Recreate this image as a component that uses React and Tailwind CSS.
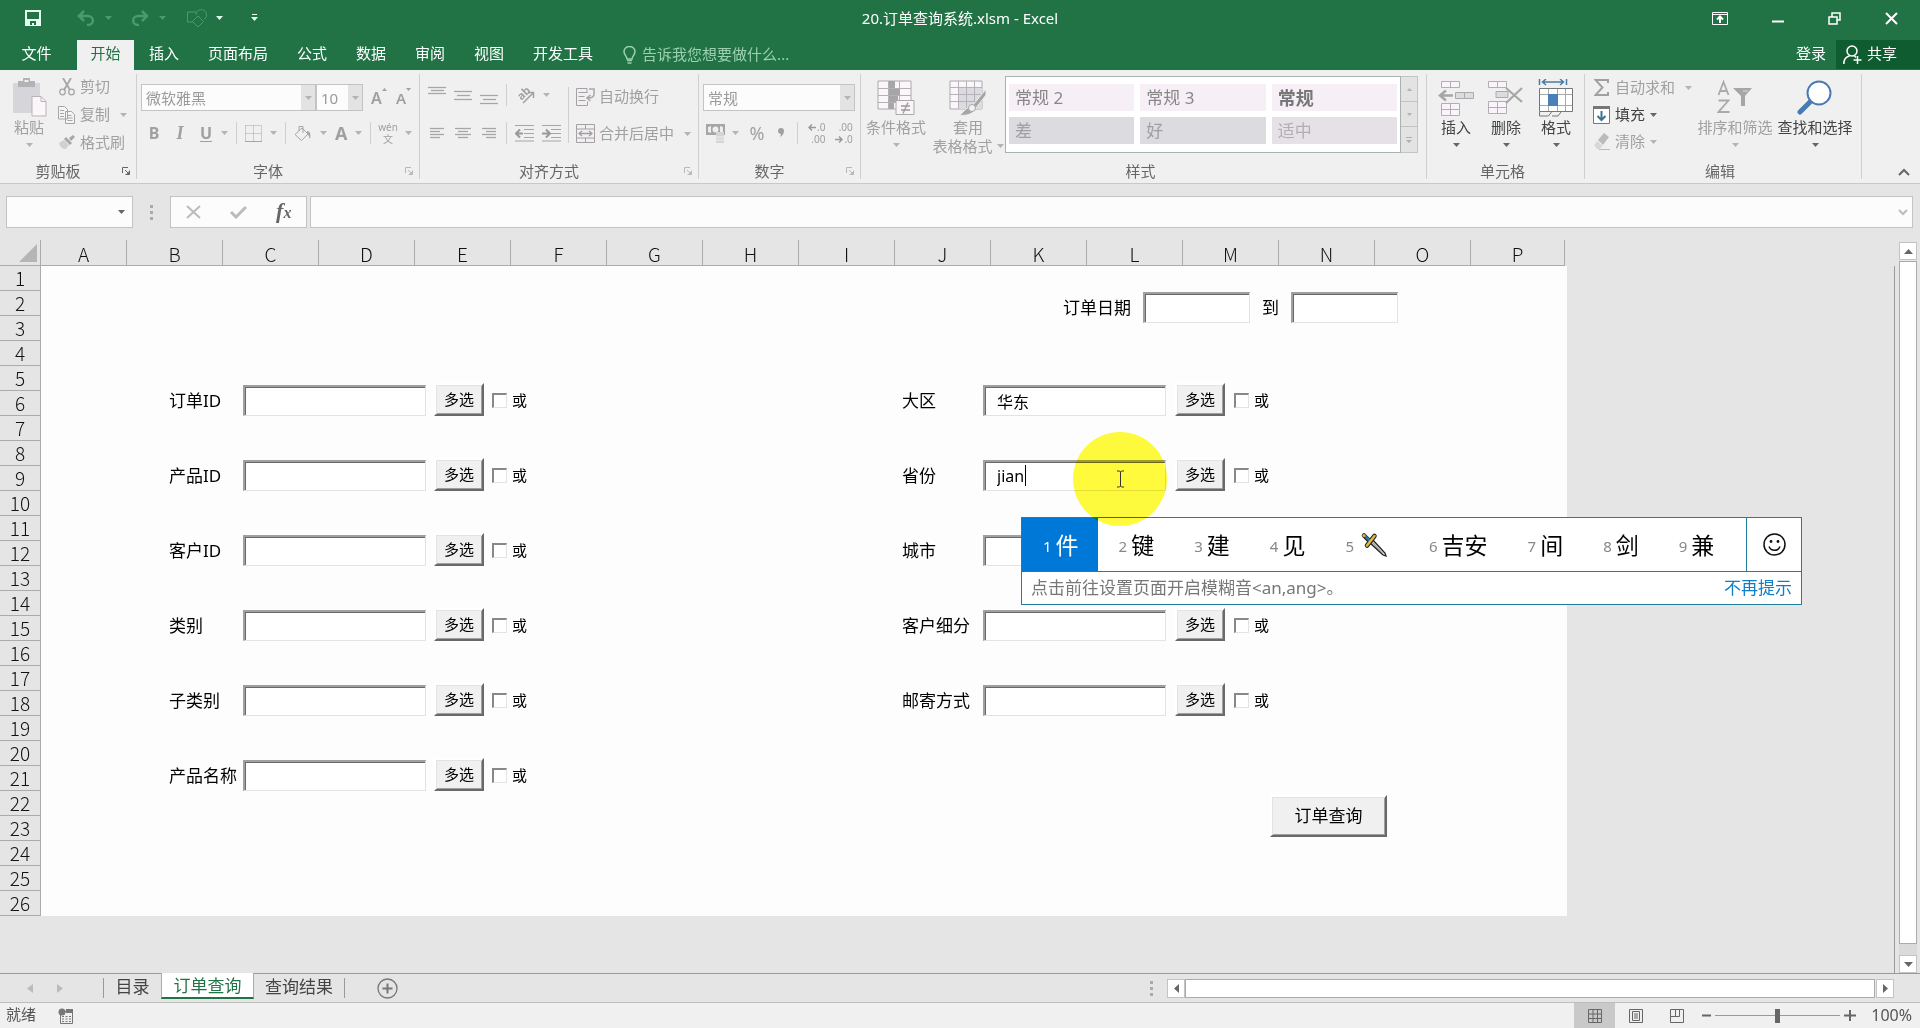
import React, { useState } from 'react';

const COLUMNS = ['B', 'C', 'D', 'E', 'F', 'G', 'H', 'I', 'J', 'K', 'L', 'M', 'N', 'O'];
const ROWS = Array.from({ length: 26 }, (_, i) => i + 1);
const TABS = ['插入', '页面布局', '公式', '数据', '审阅', '视图', '开发工具'];
const LEFT_FIELDS = ['订单ID', '产品ID', '客户ID', '类别', '子类别', '产品名称'];
const RIGHT_FIELDS = ['大区', '省份', '城市', '客户细分', '邮寄方式'];

const Svg = ({ w, h, children, className = '' }) => (
    <svg width={w} height={h} viewBox={`0 0 ${w} ${h}`} fill="none" className={`shrink-0 ${className}`} aria-hidden="true">
        {children}
    </svg>
);

const Caret = ({ className = 'text-[#b4b4b4]' }) => (
    <Svg w={7} h={4} className={className}>
        <path d="M0 0h7L3.5 4z" fill="currentColor" />
    </Svg>
);

const Separator = () => <div className="h-[22px] w-px shrink-0 bg-[#cfcfcf]" />;

const Launcher = ({ active }) => (
    <button type="button" aria-label="更多设置" className={active ? 'text-[#666]' : 'text-[#b8b8b8]'}>
        <Svg w={8} h={8}>
            <path d="M.5 6V.5H6M3 3l4 4M7.5 3.5v4h-4" stroke="currentColor" />
            <path d="M7.5 4v3.5H4z" fill="currentColor" />
        </Svg>
    </button>
);

const Group = ({ label, width, launcher, active, children }) => (
    <>
        <section className={`flex shrink-0 flex-col ${width}`}>
            <div className="h-[90px]">{children}</div>
            <div className="flex h-[22px] items-center gap-1.5 pr-1.5 text-[#666]">
                <h2 className="flex-1 text-center">{label}</h2>
                {launcher && <Launcher active={active} />}
            </div>
        </section>
        <div className="my-1 w-px shrink-0 bg-[#cfcfcf]" />
    </>
);

const RibbonSelect = ({ label, value, width }) => (
    <div className={`flex h-[27px] border border-[#c3c3c3] bg-[#fcfcfc] ${width}`}>
        <select aria-label={label} className="min-w-0 flex-1 appearance-none pl-1 leading-5 text-[#9a9a9a] outline-none">
            <option>{value}</option>
        </select>
        <span className="flex w-[14px] items-center justify-center bg-[#e3e3e3]">
            <Caret />
        </span>
    </div>
);

const BigButton = ({ icon, label, width, active, caret = true, second }) => (
    <button type="button" className={`flex flex-col items-center whitespace-nowrap ${width} ${active ? 'text-[#444]' : 'text-[#a0a0a0]'}`}>
        <span className="flex h-[39px] items-center">{icon}</span>
        <span className="leading-5">{label}</span>
        {second && (
            <span className="flex items-center gap-1 leading-[18px]">
                {second} <Caret />
            </span>
        )}
        {caret && !second && <Caret className={active ? 'mt-1.5 text-[#666]' : 'mt-1.5 text-[#b4b4b4]'} />}
    </button>
);

const SmallButton = ({ icon, label, caret, active }) => (
    <button type="button" className={`flex h-[27px] items-center gap-[5px] whitespace-nowrap ${active ? 'text-[#444]' : 'text-[#a0a0a0]'}`}>
        <span className="flex w-[17px] justify-center">{icon}</span>
        {label}
        {caret && <Caret className={active ? 'text-[#666]' : 'text-[#b4b4b4]'} />}
    </button>
);

const Lines = ({ rows, h = 20 }) => (
    <Svg w={18} h={h}>
        {rows.map(([x1, x2, y]) => (
            <path key={y} d={`M${x1} ${y}.5H${x2}`} stroke="#a6a6a6" strokeWidth="1.3" />
        ))}
    </Svg>
);

const IndentIcon = ({ right }) => (
    <Svg w={19} h={18}>
        <path d="M0 1.5h19M9 5.5h10M9 9.5h10M9 13.5h10M0 17h19" stroke="#a6a6a6" strokeWidth="1.2" />
        <path d={right ? 'M0 9.5h7M4 5.5l4 4-4 4' : 'M8 9.5H1M5 5.5l-4 4 4 4'} stroke="#999" strokeWidth="2" />
    </Svg>
);

const TitleBar = () => (
    <header className="grid h-10 grid-cols-[1fr_auto_1fr] items-center pb-1 text-white">
        <div className="flex items-center pl-[25px]">
            <button type="button" aria-label="保存">
                <Svg w={16} h={16}>
                    <path d="M1 1h14v14H1z" stroke="#e4fff0" strokeWidth="2" />
                    <path d="M1 9h14v6H1z" fill="#e4fff0" />
                    <path d="M5 11h6v4H9v-2H7v2H5z" fill="#217346" />
                </Svg>
            </button>
            <div className="ml-9 flex items-center gap-2.5 text-[#4b9a6d]">
                <Svg w={18} h={16}>
                    <path d="M2 6h9a4.500 4.200 0 0 1 0 9h-1M7 1L2 6l5 5" stroke="currentColor" strokeWidth="2.500" />
                </Svg>
                <Caret className="text-[#4b9a6d]" />
            </div>
            <div className="ml-[19px] flex items-center gap-2.5 text-[#4b9a6d]">
                <Svg w={18} h={16}>
                    <path d="M16 6H7a4.500 4.200 0 0 0 0 9h1M11 1l5 5-5 5" stroke="currentColor" strokeWidth="2.500" />
                </Svg>
                <Caret className="text-[#4b9a6d]" />
            </div>
            <div className="ml-[21px] flex items-center gap-2">
                <Svg w={21} h={20}>
                    <path d="M6 14H.5V4H9M11 8l5.500 5.500L11 19l-5.500-5.500z" stroke="#4b9a6d" />
                    <path d="M9 7a5.300 5.300 0 1 1 8 4.500" stroke="#4b9a6d" />
                </Svg>
                <Caret className="text-[#e4fff0]" />
            </div>
            <Svg w={7} h={8} className="ml-7">
                <path d="M1 .5h5" stroke="#e4fff0" />
                <path d="M0 3h7L3.500 7z" fill="#e4fff0" />
            </Svg>
        </div>
        <h1 className="leading-6">20.订单查询系统.xlsm - Excel</h1>
        <div className="flex items-center justify-end gap-11 pr-[22px]">
            <button type="button" aria-label="功能区显示选项">
                <Svg w={16} h={13}>
                    <path d="M.5.500h15v12H.5zM.5 2.500h15" stroke="#fff" />
                    <path d="M8 11V5M5 7.500L8 4.500l3 3" stroke="#fff" strokeWidth="2" />
                </Svg>
            </button>
            <button type="button" aria-label="最小化">
                <Svg w={12} h={12}><path d="M0 9.500h12" stroke="#fff" strokeWidth="2" /></Svg>
            </button>
            <button type="button" aria-label="还原">
                <Svg w={13} h={13}>
                    <path d="M1 5h8v7H1zM4 5V1h8v7H9" stroke="#fff" strokeWidth="1.500" />
                </Svg>
            </button>
            <button type="button" aria-label="关闭">
                <Svg w={13} h={13}><path d="M1 1l11 11M12 1L1 12" stroke="#fff" strokeWidth="2" /></Svg>
            </button>
        </div>
    </header>
);

const TabBar = () => (
    <nav className="flex h-[30px] items-stretch text-white">
        <button type="button" className="w-[77px] pr-1 pb-[3px]">文件</button>
        <button type="button" className="w-[57px] bg-[#f0f0f0] pb-[3px] text-[#217346]">开始</button>
        {TABS.map((tab) => (
            <button key={tab} type="button" className="pr-[14px] pb-[3px] pl-[15px]">{tab}</button>
        ))}
        <label className="ml-4 flex items-center gap-1.5 text-[#9bd0b0]">
            <Svg w={13} h={18}>
                <path d="M4 13c0-3-3-4-3-7.500a5.500 5 0 0 1 11 0C12 9 9 10 9 13z" stroke="currentColor" strokeWidth="1.500" />
                <path d="M4 14.500h5M4.500 17h4" stroke="currentColor" strokeWidth="1.500" />
            </Svg>
            <input placeholder="告诉我您想要做什么..." className="w-48 pb-0.5 outline-none placeholder:text-[#9bd0b0]" />
        </label>
        <div className="ml-auto flex">
            <button type="button" className="px-2.5 pb-[3px]">登录</button>
            <button type="button" className="mb-px flex w-[84px] items-center gap-[5px] bg-[#0e5c2f] pl-[7px]">
                <Svg w={19} h={19}>
                    <circle cx="9" cy="6" r="5" stroke="#fff" strokeWidth="1.500" />
                    <path d="M.8 19c0-5 3-7.500 6-8.200M11 10.500l2 2M14.500 11v8M10.500 15h8" stroke="#fff" strokeWidth="1.500" />
                </Svg>
                <span className="pb-0.5">共享</span>
            </button>
        </div>
    </nav>
);

const ClipboardGroup = () => (
    <Group label="剪贴板" width="w-[136px]" launcher active>
        <div className="flex pt-[3px]">
            <div className="w-[58px] pt-[5px]">
                <BigButton
                    label="粘贴"
                    width="w-[58px]"
                    icon={
                        <Svg w={35} h={39}>
                            <path d="M1 5h27v30H1z" fill="#d6d5d9" />
                            <path d="M6 3h5V0h7v3h5v6H6z" fill="#b3b2b5" />
                            <path d="M12.500 2h4v2h-4z" fill="#f0f0f0" />
                            <path d="M20 18.500h9l5 5V38H20z" fill="#faf6fa" stroke="#b8b3b8" />
                            <path d="M29 18.500v5h5" stroke="#b8b3b8" />
                        </Svg>
                    }
                />
            </div>
            <div className="flex flex-col gap-px">
                <SmallButton
                    label="剪切"
                    icon={
                        <Svg w={16} h={18}>
                            <path d="M4 0l7 12M12 0L5 12" stroke="#a6a6a6" strokeWidth="1.800" />
                            <circle cx="3.500" cy="14" r="2.800" stroke="#a6a6a6" strokeWidth="1.300" />
                            <circle cx="12.500" cy="14" r="2.800" stroke="#a6a6a6" strokeWidth="1.300" />
                        </Svg>
                    }
                />
                <div className="flex items-center gap-2.5">
                    <SmallButton
                        label="复制"
                        icon={
                            <Svg w={17} h={18}>
                                <path d="M.5.500h6l3 3V13h-9zM7.500 5.500h6l3 3v9h-9z" fill="#f5f3f5" stroke="#a6a6a6" />
                                <path d="M2 4.500h4M2 7.500h4M2 10.500h4M9.500 9.500h4M9.500 12h5M9.500 14.500h5" stroke="#a6a6a6" />
                            </Svg>
                        }
                    />
                    <Caret />
                </div>
                <SmallButton
                    label="格式刷"
                    icon={
                        <Svg w={17} h={15}>
                            <path d="M1 8l5-3 5 5-3 4C4 14 2 12 1 8z" fill="#d2d0d2" />
                            <path d="M6 4l2-2 6 6-2 2zM11 3l4-3 2 2-4 4z" fill="#a6a6a6" />
                        </Svg>
                    }
                />
            </div>
        </div>
    </Group>
);

const FontGroup = () => (
    <Group label="字体" width="w-[282px]" launcher>
        <div className="flex h-full flex-col gap-2.5 pt-[14px]">
            <div className="flex items-center pl-1">
                <RibbonSelect label="字体" value="微软雅黑" width="w-[175px]" />
                <RibbonSelect label="字号" value="10" width="w-[47px]" />
                <div className="flex gap-2.5 pl-2 text-[#a0a0a0]">
                    <button type="button" aria-label="增大字号" className="flex w-[15px]">
                        <span className="text-base leading-5 font-semibold">A</span>
                        <Svg w={5} h={3}><path d="M0 3h5L2.500 0z" fill="currentColor" /></Svg>
                    </button>
                    <button type="button" aria-label="减小字号" className="flex w-[15px]">
                        <span className="leading-5 font-semibold">A</span>
                        <Svg w={5} h={3}><path d="M0 0h5L2.500 3z" fill="currentColor" /></Svg>
                    </button>
                </div>
            </div>
            <div className="flex h-6 items-center gap-2 pl-[10px] text-[#a0a0a0]">
                <div className="flex items-center gap-3">
                    <button type="button" className="w-[14px] text-base font-bold">B</button>
                    <button type="button" className="w-[14px] font-['Liberation_Serif',serif] text-lg font-bold italic">I</button>
                    <button type="button" className="w-[14px] text-base font-bold underline underline-offset-2">U</button>
                </div>
                <Caret />
                <Separator />
                <Svg w={17} h={17}>
                    <path d="M.5.500h16M.5 8.500h16M.5.500v16M8.500.500v16M16.500.500v16" stroke="#a6a6a6" strokeDasharray="1 1" />
                    <path d="M0 16.500h17" stroke="#a6a6a6" />
                </Svg>
                <Caret />
                <Separator />
                <Svg w={18} h={17}>
                    <path d="M1 9.500l7-6.500 6 6-6.500 6.500z" stroke="#a6a6a6" />
                    <path d="M5 6V1.500h4V8" stroke="#a6a6a6" />
                    <path d="M13 6c3 0 4 3 3 8-1-1-1-4-3-6z" fill="#a6a6a6" />
                </Svg>
                <Caret />
                <button type="button" className="w-3 text-lg leading-5 font-bold">A</button>
                <Caret />
                <Separator />
                <button type="button" className="flex w-[18px] flex-col items-center text-[10px] leading-3">
                    <span>wén</span>
                    <span>文</span>
                </button>
                <Caret />
            </div>
        </div>
    </Group>
);

const AlignGroup = () => (
    <Group label="对齐方式" width="w-[278px]" launcher>
        <div className="flex items-center pt-2 pl-2">
            <div className="flex flex-col gap-[2px]">
                <div className="flex h-[34px] items-center gap-2">
                    <Lines rows={[[0, 18, 2], [3, 16, 5], [0, 18, 8]]} />
                    <Lines rows={[[0, 18, 6], [3, 16, 10], [0, 18, 14]]} />
                    <Lines rows={[[0, 18, 10], [3, 16, 14], [0, 18, 18]]} />
                    <Separator />
                    <Svg w={20} h={18}>
                        <text x="3" y="12" transform="rotate(-45 8 9)" fontSize="11" fill="#a0a0a0" fontWeight="bold">ab</text>
                        <path d="M8 17L18 7M18.500 12V6.500H13" stroke="#a0a0a0" strokeWidth="1.500" />
                    </Svg>
                    <Caret />
                </div>
                <div className="flex h-[38px] items-center gap-2">
                    <Lines rows={[[2, 16, 5], [2, 12, 8], [2, 16, 11], [2, 12, 14]]} />
                    <Lines rows={[[1, 17, 5], [4, 14, 8], [1, 17, 11], [4, 14, 14]]} />
                    <Lines rows={[[2, 16, 5], [6, 16, 8], [2, 16, 11], [6, 16, 14]]} />
                    <Separator />
                    <IndentIcon />
                    <IndentIcon right />
                </div>
            </div>
            <div className="mx-[7px] h-14 w-px bg-[#cfcfcf]" />
            <div className="flex flex-col gap-[9px] text-[#a0a0a0]">
                <button type="button" className="flex h-7 items-center gap-1">
                    <Svg w={19} h={18}>
                        <path d="M11 4.500V.5H.5v17h11v-4M2.500 4.500h9M2.500 8.500h6M2.500 12.500h7" stroke="#a6a0a6" />
                        <path d="M13 1h5v5c0 3-2 4-6 4M14.500 7l-3.500 3 3.500 3" stroke="#a6a6a6" strokeWidth="1.500" />
                    </Svg>
                    自动换行
                </button>
                <button type="button" className="flex h-7 items-center gap-1 whitespace-nowrap">
                    <Svg w={19} h={19}>
                        <path d="M.5.500h18v18H.5zM.5 5h18M.5 14h18M9.500.500V5M9.500 14v4.500" stroke="#a6a0a6" />
                        <path d="M3 9.500h13M6 7L3 9.500 6 12M13 7l3 2.500-3 2.500" stroke="#a0a0a0" strokeWidth="1.300" />
                    </Svg>
                    合并后居中
                    <span className="ml-1.5"><Caret /></span>
                </button>
            </div>
        </div>
    </Group>
);

const NumberGroup = () => (
    <Group label="数字" width="w-[161px]" launcher>
        <div className="flex flex-col gap-2.5 px-1 pt-[14px]">
            <RibbonSelect label="数字格式" value="常规" width="w-[152px]" />
            <div className="flex h-6 items-center gap-2.5 pl-[3px] text-[#a0a0a0]">
                <div className="flex items-center gap-1.5">
                    <Svg w={20} h={19}>
                        <path d="M0 0h19v11H0z" fill="#a6a6a6" />
                        <path d="M2 3l3-1v7l-3-1zM17 3l-3-1v7l3-1z" fill="#eee" />
                        <circle cx="9.500" cy="5.500" r="3" fill="#eee" />
                        <path d="M10 8h8v11h-8z" fill="#d6d4d8" />
                        <path d="M6 13h12M6 16h12" stroke="#efefef" />
                    </Svg>
                    <Caret />
                </div>
                <button type="button" className="w-4 text-lg leading-5">%</button>
                <button type="button" aria-label="千位分隔样式" className="flex w-3 justify-center">
                    <Svg w={8} h={12}><path d="M1 4a3 3 0 1 1 6 0c0 3-2 5-4 6 0-1 1-2 1-3-2 0-3-1.500-3-3z" fill="#a0a0a0" /></Svg>
                </button>
                <Separator />
                <button type="button" className="flex flex-col items-end text-[10px] leading-3">
                    <span className="flex items-center gap-px">
                        <Svg w={8} h={7}><path d="M8 3.500H1M4 .5l-3 3 3 3" stroke="#999" strokeWidth="1.500" /></Svg>.0
                    </span>
                    <span>.00</span>
                </button>
                <button type="button" className="flex flex-col items-end text-[10px] leading-3">
                    <span>.00</span>
                    <span className="flex items-center gap-px">
                        <Svg w={8} h={7}><path d="M0 3.500h7M4 .5l3 3-3 3" stroke="#999" strokeWidth="1.500" /></Svg>.0
                    </span>
                </button>
            </div>
        </div>
    </Group>
);

const StylesGroup = () => (
    <Group label="样式" width="w-[565px]">
        <div className="flex pt-1.5">
            <div className="flex pt-0.5">
                <BigButton
                    label="条件格式"
                    width="w-[70px]"
                    icon={
                        <Svg w={38} h={36}>
                            <path d="M1 1h33v28H1z" fill="#faf6fa" stroke="#aaa" />
                            <path d="M1 8.500h33M1 15.500h33M1 22.500h33M11.500 1v28M22.500 1v28" stroke="#b5b0b5" />
                            <path d="M12 1h6v7h-6zM12 9h11v6H12zM12 16h9v6h-9zM12 23h5v6h-5z" fill="#a6a6a6" />
                            <path d="M19 20.500h18v14H19z" fill="#faf4f9" stroke="#aaa" />
                            <path d="M24 26h9M24 30h9M31 22.500l-5 11" stroke="#999" strokeWidth="1.300" />
                        </Svg>
                    }
                />
                <BigButton
                    label="套用"
                    second="表格格式"
                    width="w-[74px]"
                    icon={
                        <Svg w={38} h={38}>
                            <path d="M1 2h32v28H1z" fill="#faf6fa" stroke="#aaa" />
                            <path d="M9 9h24v21H9z" fill="#dcdbe0" />
                            <path d="M1 8.500h32M1 15.500h32M1 22.500h32M9.500 2v28M17.500 2v28M25.500 2v28" stroke="#b5b2b8" />
                            <path d="M37 10v6L27 29l-3-3zM10 36c4-1 5-6 10-8l5 3c-2 5-9 6-15 5z" fill="#a6a6a6" stroke="#f0f0f0" />
                            <circle cx="23" cy="29" r="3.500" fill="#f3f1f3" stroke="#a6a6a6" />
                        </Svg>
                    }
                />
            </div>
            <div className="flex h-[77px]">
                <div className="grid w-[396px] grid-cols-3 content-start gap-1.5 border border-[#a9b3ae] bg-white px-[3px] pt-[7px] text-[17px] text-[#888]">
                    <button type="button" className="h-[27px] bg-[#f6f0f6] pl-1.5 text-left">常规 2</button>
                    <button type="button" className="h-[27px] bg-[#f6f0f6] pl-1.5 text-left">常规 3</button>
                    <button type="button" className="h-[27px] bg-[#f6f0f6] pl-1.5 text-left text-lg font-bold text-[#777]">常规</button>
                    <button type="button" className="h-[27px] bg-[#dcdbe0] pl-1.5 text-left text-[#a0a0a0]">差</button>
                    <button type="button" className="h-[27px] bg-[#dcdbe0] pl-1.5 text-left text-[#a0a0a0]">好</button>
                    <button type="button" className="h-[27px] bg-[#e6e1e7] pl-1.5 text-left text-[#b0b0b0]">适中</button>
                </div>
                <div className="grid w-[17px] grid-rows-3 divide-y divide-[#c3c3c3] border border-l-0 border-[#c3c3c3] bg-[#e3e3e3]">
                    <button type="button" aria-label="上一行" className="flex items-center justify-center">
                        <Svg w={5} h={3}><path d="M0 3h5L2.500 0z" fill="#b0b0b0" /></Svg>
                    </button>
                    <button type="button" aria-label="下一行" className="flex items-center justify-center">
                        <Svg w={5} h={3}><path d="M0 0h5L2.500 3z" fill="#b0b0b0" /></Svg>
                    </button>
                    <button type="button" aria-label="其他" className="flex items-center justify-center">
                        <Svg w={6} h={6}><path d="M0 .5h6" stroke="#b0b0b0" /><path d="M0 3h6L3 6z" fill="#b0b0b0" /></Svg>
                    </button>
                </div>
            </div>
        </div>
    </Group>
);

const CellsGroup = () => (
    <Group label="单元格" width="w-[157px]">
        <div className="flex pt-2 pl-1">
            <BigButton
                label="插入"
                width="w-[50px]"
                active
                icon={
                    <Svg w={36} h={36}>
                        <path d="M3.500 1.500h18v6h-18zM12.500 1.500v6M3.500 23.500h18v12h-18zM3.500 29.500h18M12.500 23.500v12" fill="#faf4fa" stroke="#b5adb5" />
                        <path d="M17.500 12.500h18v6h-18zM26.500 12.500v6" fill="#dcdbe0" stroke="#aaa" />
                        <path d="M15 15.500H2M8 10.500l-6 5 6 5" stroke="#a6a6a6" strokeWidth="2.500" />
                    </Svg>
                }
            />
            <BigButton
                label="删除"
                width="w-[50px]"
                active
                icon={
                    <Svg w={36} h={36}>
                        <path d="M.5 1.500h18v6H.5zM9.500 1.500v6M.5 21.500h18v12H.5zM.5 27.500h18M9.500 21.500v12" fill="#faf4fa" stroke="#b5adb5" />
                        <path d="M8 11.500h12v6H8z" fill="#dcdbe0" stroke="#aaa" />
                        <path d="M18 8l16 14M34 8L18 23" stroke="#a6a6a6" strokeWidth="2.200" />
                    </Svg>
                }
            />
            <BigButton
                label="格式"
                width="w-[50px]"
                active
                icon={
                    <Svg w={36} h={38}>
                        <path d="M1.500 0v6M28.500 0v6M5 3h20M8 0L4.500 3 8 6M22 0l3.500 3L22 6" stroke="#4a7ba6" strokeWidth="1.500" />
                        <path d="M1.500 9.500h33v23h-33z" fill="#fff" stroke="#777" />
                        <path d="M2 15.500h32M2 26.500h32M10.500 10v22M19.500 10v22M27.500 10v22" stroke="#aaa" />
                        <path d="M10 15h10v12H10z" fill="#4a80b8" />
                        <path d="M1.500 33v4h9l3-4M14 37h6l3-4" stroke="#777" />
                    </Svg>
                }
            />
        </div>
    </Group>
);

const EditingGroup = () => (
    <Group label="编辑" width="w-[276px]">
        <div className="flex pt-1 pl-2">
            <div className="flex w-[102px] flex-col">
                <div className="flex items-center gap-2.5">
                    <SmallButton
                        label="自动求和"
                        icon={<Svg w={15} h={17}><path d="M14 4V1H1.500l7 7.500-7 7.500H14v-3" stroke="#a0a0a0" strokeWidth="2" /></Svg>}
                    />
                    <Caret />
                </div>
                <SmallButton
                    label="填充"
                    caret
                    active
                    icon={
                        <Svg w={17} h={18}>
                            <path d="M.5.500h16v17H.5z" fill="#fff" stroke="#777" />
                            <path d="M0 0h17v3H0z" fill="#777" />
                            <path d="M8.500 5v9M4.500 10l4 4 4-4" stroke="#3f7396" strokeWidth="2" />
                        </Svg>
                    }
                />
                <SmallButton
                    label="清除"
                    caret
                    icon={
                        <Svg w={17} h={17}>
                            <path d="M5 7l6-7 5 4-6 8z" fill="#bbb" />
                            <path d="M4.500 8l5 5-3 3H4l-3-4z" fill="#d8d6da" />
                            <path d="M6 16.500h11" stroke="#bbb" />
                        </Svg>
                    }
                />
            </div>
            <div className="flex pt-1">
                <BigButton
                    label="排序和筛选"
                    width="w-[80px]"
                    icon={
                        <Svg w={36} h={36}>
                            <path d="M1.500 15L6.500 2l5 13M3 11h7M1.500 20.500h10l-10 11.500h11" stroke="#aaa" strokeWidth="1.800" />
                            <path d="M16 8h19l-7 8v10h-4V16z" fill="#a6a6a6" />
                            <path d="M26 11h5" stroke="#ddd" />
                        </Svg>
                    }
                />
                <BigButton
                    label="查找和选择"
                    width="w-[80px]"
                    active
                    icon={
                        <Svg w={36} h={36}>
                            <path d="M14 21L3 32" stroke="#4a7bb0" strokeWidth="5" strokeLinecap="round" />
                            <circle cx="22" cy="13" r="11.500" fill="#fff" stroke="#4a7bb0" strokeWidth="2" />
                        </Svg>
                    }
                />
            </div>
        </div>
    </Group>
);

const Ribbon = () => (
    <div className="flex h-[114px] border-b border-[#c8c8c8] bg-[#f0f0f0]">
        <ClipboardGroup />
        <FontGroup />
        <AlignGroup />
        <NumberGroup />
        <StylesGroup />
        <CellsGroup />
        <EditingGroup />
        <button type="button" aria-label="折叠功能区" className="ml-auto flex items-end pr-[10px] pb-[7px]">
            <Svg w={12} h={8}><path d="M1 7l5-5 5 5" stroke="#666" strokeWidth="2" /></Svg>
        </button>
    </div>
);

const FormulaBar = () => (
    <div className="flex items-stretch py-3 pr-[7px] pl-1.5">
        <div className="flex h-8 w-[127px] items-center border border-[#c3c3c3] bg-[#fcfcfc] pr-[7px]">
            <input aria-label="名称框" className="w-0 flex-1 px-1 outline-none" />
            <Caret className="text-[#666]" />
        </div>
        <div className="flex w-[37px] flex-col items-center justify-center gap-[3px]">
            <i className="size-[3px] bg-[#aaa]" />
            <i className="size-[3px] bg-[#aaa]" />
            <i className="size-[3px] bg-[#aaa]" />
        </div>
        <div className="flex w-[137px] items-center justify-around border border-[#c3c3c3] bg-[#fcfcfc]">
            <button type="button" aria-label="取消">
                <Svg w={15} h={14}><path d="M1 1l13 12M14 1L1 13" stroke="#bbb" strokeWidth="2" /></Svg>
            </button>
            <button type="button" aria-label="输入">
                <Svg w={17} h={13}><path d="M1 6l5 5L16 1" stroke="#bbb" strokeWidth="3" /></Svg>
            </button>
            <button type="button" aria-label="插入函数" className="font-['Liberation_Serif',serif] font-bold text-[#666] italic">
                <span className="text-[22px] leading-6">f</span>
                <span className="text-base">x</span>
            </button>
        </div>
        <div className="ml-[3px] flex flex-1 items-center border border-[#c3c3c3] bg-[#fcfcfc] pr-1">
            <input aria-label="编辑栏" className="flex-1 px-2 outline-none" />
            <Svg w={10} h={7}><path d="M1 1l4 4 4-4" stroke="#bbb" strokeWidth="2" /></Svg>
        </div>
    </div>
);

const SunkenInput = ({ width, ...props }) => (
    <input
        {...props}
        className={`h-[31px] shrink-0 border-t-2 border-r border-b border-l-2 border-t-[#a0a0a0] border-r-[#e3e3e3] border-b-[#e3e3e3] border-l-[#a0a0a0] bg-white px-3 text-base shadow-[inset_1px_1px_0_#696969] outline-none ${width}`}
    />
);

const RaisedButton = ({ className, children }) => (
    <button
        type="button"
        className={`shrink-0 border-2 border-t-white border-r-[#696969] border-b-[#696969] border-l-white bg-[#f0f0f0] shadow-[inset_1px_1px_0_#e3e3e3,inset_-1px_-1px_0_#a0a0a0] ${className}`}
    >
        {children}
    </button>
);

const FieldRow = ({ label, labelWidth, gap, value, onChange }) => {
    const id = `field-${label}`;

    return (
        <div className="flex items-end text-black">
            <label htmlFor={id} className={`shrink-0 text-[17px] leading-[31px] whitespace-nowrap ${labelWidth}`}>{label}</label>
            <div className={`flex items-end ${gap}`}>
                <SunkenInput id={id} width="w-[183px]" value={value} onChange={(e) => onChange(label, e.target.value)} />
                <RaisedButton className="h-[33px] w-[50px]">多选</RaisedButton>
                <label className="flex h-[31px] items-center gap-[5px]">
                    <input
                        type="checkbox"
                        className="size-[15px] appearance-none border-t-2 border-r border-b border-l-2 border-t-[#888] border-r-[#e3e3e3] border-b-[#e3e3e3] border-l-[#888] bg-white checked:bg-gray-500"
                    />
                    或
                </label>
            </div>
        </div>
    );
};

const DaggerIcon = () => (
    <Svg w={31} h={25}>
        <path d="M10 8l4-1 13 14 1 3-3-1L11 10z" fill="#d4d4d4" stroke="#222" strokeWidth="1.300" />
        <path d="M13 9l12 13" stroke="#888" />
        <path d="M6 3.500l6 6" stroke="#222" strokeWidth="4.500" strokeLinecap="round" />
        <path d="M9 13.500L16.500 4" stroke="#222" strokeWidth="4.500" strokeLinecap="round" />
        <path d="M7 4l5 5" stroke="#2f6f9c" strokeWidth="2.500" />
        <path d="M9 13.500L16.500 4" stroke="#e2bd3c" strokeWidth="2.500" strokeLinecap="round" />
        <circle cx="6" cy="3.500" r="1.500" fill="#e2bd3c" />
    </Svg>
);

const CANDIDATES = ['件', '键', '建', '见', <DaggerIcon key="dagger" />, '吉安', '间', '剑', '兼'];

const ImePopup = () => (
    <div className="absolute top-[251px] left-[980px] w-[781px] border border-[#1f7f9c] bg-white text-black">
        <div className="flex h-[54px] border-b border-[#1f7f9c]">
            {CANDIDATES.map((item, i) => (
                <button
                    key={i}
                    type="button"
                    className={`flex items-center gap-1 pr-[19px] pl-[21px] ${i === 0 ? 'bg-[#0078d7] text-white' : ''}`}
                >
                    <span className={`pt-1 ${i === 0 ? '' : 'text-[#888]'}`}>{i + 1}</span>
                    <span className="text-[23px] leading-8 whitespace-nowrap">{item}</span>
                </button>
            ))}
            <button type="button" aria-label="表情" className="ml-auto flex w-[55px] items-center justify-center border-l border-[#1f7f9c]">
                <Svg w={23} h={23}>
                    <circle cx="11.500" cy="11.500" r="10.500" stroke="#111" strokeWidth="1.500" />
                    <path d="M6 13.500c2 5 9 5 11 0" stroke="#111" strokeWidth="1.500" />
                    <circle cx="8" cy="8.500" r="1.400" fill="#111" />
                    <circle cx="15" cy="8.500" r="1.400" fill="#111" />
                </Svg>
            </button>
        </div>
        <div className="flex h-8 items-center justify-between px-[9px] text-[17px] whitespace-nowrap">
            <span className="text-[#777]">点击前往设置页面开启模糊音&lt;an,ang&gt;。</span>
            <a href="#" className="text-[#0f7fc4]">不再提示</a>
        </div>
    </div>
);

const QueryForm = () => {
    const [values, setValues] = useState({ 大区: '华东', 省份: 'jian' });

    const handleChange = (name, value) => {
        setValues({ ...values, [name]: value });
    };

    return (
        <form className="relative h-[650px] w-[1526px] shrink-0 bg-[#fdfdfd] pt-[26px]">
            <div className="flex items-center gap-3 pl-[1022px] text-[17px]">
                <label htmlFor="date-from">订单日期</label>
                <SunkenInput id="date-from" width="w-[107px]" />
                <label htmlFor="date-to">到</label>
                <SunkenInput id="date-to" width="w-[107px]" />
            </div>
            <div className="flex pt-[60px] pl-32">
                <div className="flex w-[733px] flex-col gap-[42px]">
                    {LEFT_FIELDS.map((label) => (
                        <FieldRow key={label} label={label} labelWidth="w-[74px]" gap="gap-2" value={values[label] || ''} onChange={handleChange} />
                    ))}
                </div>
                <div className="flex flex-col gap-[42px]">
                    {RIGHT_FIELDS.map((label) => (
                        <FieldRow key={label} label={label} labelWidth="w-[81px]" gap="gap-[9px]" value={values[label] || ''} onChange={handleChange} />
                    ))}
                </div>
            </div>
            <div className="flex justify-end pt-1 pr-[180px]">
                <RaisedButton className="h-[42px] w-[117px] text-[17px]">订单查询</RaisedButton>
            </div>
            <ImePopup />
            {/* text caret after the typed pinyin */}
            <div className="absolute top-[199px] left-[984px] h-[21px] w-px bg-black" />
            {/* highlighted mouse pointer */}
            <div className="pointer-events-none absolute top-[166px] left-[1032px] flex size-[94px] items-center justify-center rounded-full bg-[#fffb3c] mix-blend-multiply">
                <Svg w={9} h={18}>
                    <path d="M1 1h2.500l1 1 1-1H8M4.500 2v14M1 17h2.500l1-1 1 1H8" stroke="#333" />
                </Svg>
            </div>
        </form>
    );
};

const Worksheet = () => (
    <main className="flex min-h-0 flex-1">
        <div className="flex min-w-0 flex-1 flex-col">
            <div className="flex h-[26px] font-['Noto_Sans_CJK_SC',sans-serif] text-[19px] font-light text-[#111]">
                <div className="flex w-[41px] shrink-0 items-end justify-end border-r border-b border-[#ababab] pr-[3px] pb-[3px]">
                    <Svg w={18} h={18}><path d="M18 0v18H0z" fill="#b5b5b5" /></Svg>
                </div>
                <div className="w-[86px] shrink-0 border-r border-b border-[#ababab] text-center leading-7">A</div>
                {COLUMNS.map((col) => (
                    <div key={col} className="w-24 shrink-0 border-r border-b border-[#ababab] text-center leading-7">{col}</div>
                ))}
                <div className="w-[94px] shrink-0 border-r border-b border-[#ababab] text-center leading-7">P</div>
            </div>
            <div className="flex min-h-0 flex-1 border-r border-[#9a9a9a]">
                <div className="w-[41px] shrink-0 text-center font-['Noto_Sans_CJK_SC',sans-serif] text-[19px] leading-6 font-light text-[#111]">
                    {ROWS.map((row) => (
                        <div key={row} className="h-[25px] border-r border-b border-[#ababab]">{row}</div>
                    ))}
                </div>
                <QueryForm />
            </div>
        </div>
        <div className="flex w-[25px] flex-col pt-[2px] pr-[3px] pl-1">
            <button type="button" aria-label="向上滚动" className="flex h-[18px] items-center justify-center border border-[#c3c3c3] bg-white">
                <Svg w={9} h={5}><path d="M0 5h9L4.500 0z" fill="#666" /></Svg>
            </button>
            <div className="mt-px flex-1 border border-[#ababab] bg-white" />
            <div className="h-[11px] bg-[#dadada]" />
            <button type="button" aria-label="向下滚动" className="flex h-[18px] items-center justify-center border border-[#c3c3c3] bg-white">
                <Svg w={9} h={5}><path d="M0 0h9L4.500 5z" fill="#666" /></Svg>
            </button>
        </div>
    </main>
);

const SheetTabs = () => (
    <div className="flex h-[29px] border-t border-[#9a9a9a] text-[17px] text-[#444]">
        <div className="flex w-[103px] items-center gap-6 pl-[27px]">
            <Svg w={6} h={9}><path d="M6 0v9L0 4.500z" fill="#bbb" /></Svg>
            <Svg w={6} h={9}><path d="M0 0v9l6-4.500z" fill="#bbb" /></Svg>
        </div>
        <div className="my-1 w-px bg-[#9a9a9a]" />
        <button type="button" className="w-[57px] pb-2">目录</button>
        <button type="button" className="-mt-px mb-[3px] w-[93px] border-x border-b-2 border-x-[#ababab] border-b-[#217346] bg-white pb-1 text-[#217346]">订单查询</button>
        <button type="button" className="w-[90px] pb-2">查询结果</button>
        <div className="my-1 w-px bg-[#9a9a9a]" />
        <button type="button" aria-label="新工作表" className="ml-8 flex items-center">
            <Svg w={21} h={21}>
                <circle cx="10.500" cy="10.500" r="9.500" stroke="#777" strokeWidth="1.300" />
                <path d="M10.500 5.500v10M5.500 10.500h10" stroke="#777" strokeWidth="2" />
            </Svg>
        </button>
        <div className="ml-auto flex w-[770px] items-center pr-[26px]">
            <div className="flex w-[17px] flex-col gap-[3px]">
                <i className="size-[3px] bg-[#aaa]" />
                <i className="size-[3px] bg-[#aaa]" />
                <i className="size-[3px] bg-[#aaa]" />
            </div>
            <button type="button" aria-label="向左滚动" className="flex h-[19px] w-[18px] items-center justify-center border border-[#c3c3c3] bg-white">
                <Svg w={5} h={9}><path d="M5 0v9L0 4.500z" fill="#666" /></Svg>
            </button>
            <div className="mr-px h-[19px] flex-1 border border-[#ababab] bg-white" />
            <button type="button" aria-label="向右滚动" className="flex h-[19px] w-[18px] items-center justify-center border border-[#c3c3c3] bg-white">
                <Svg w={5} h={9}><path d="M0 0v9l5-4.500z" fill="#666" /></Svg>
            </button>
        </div>
    </div>
);

const StatusBar = () => (
    <footer className="flex h-[26px] items-center border-t border-[#bdbdbd] bg-[#f0f0f0] pr-2 pl-1.5 text-[#555]">
        <span className="pb-0.5">就绪</span>
        <Svg w={16} h={16} className="ml-[22px]">
            <path d="M2.500 3.500h12v12h-12z" stroke="#777" />
            <path d="M8 1h7v4H8z" fill="#777" />
            <circle cx="4" cy="4" r="3.500" fill="#777" />
            <path d="M4 8.500h9M4 11h9M4 13.500h9" stroke="#777" strokeDasharray="2 1.500" />
        </Svg>
        <div className="ml-auto flex h-full">
            <button type="button" aria-label="普通" className="flex w-[41px] items-center justify-center bg-[#c9c9c9]">
                <Svg w={14} h={14}><path d="M.5.500h13v13H.5zM5 0v14M9.500 0v14M0 5h14M0 9.500h14" stroke="#666" /></Svg>
            </button>
            <button type="button" aria-label="页面布局" className="flex w-[41px] items-center justify-center">
                <Svg w={14} h={14}><path d="M.5.500h13v13H.5zM3.500 2.500h7v9h-7zM5 5h4M5 7h4M5 9h4" stroke="#666" /></Svg>
            </button>
            <button type="button" aria-label="分页预览" className="flex w-[41px] items-center justify-center">
                <Svg w={14} h={14}><path d="M.5.500h13v13H.5zM5.500 0v7.500M.5 7.500h9M9.500 0v7.500" stroke="#666" /></Svg>
            </button>
        </div>
        <div className="flex items-center gap-1 pl-[5px]">
            <button type="button" aria-label="缩小"><Svg w={9} h={11}><path d="M0 5.500h9" stroke="#666" strokeWidth="2" /></Svg></button>
            <input
                type="range"
                aria-label="显示比例"
                defaultValue="50"
                className="h-px w-[125px] appearance-none bg-[#999] [&::-webkit-slider-thumb]:h-[14px] [&::-webkit-slider-thumb]:w-[5px] [&::-webkit-slider-thumb]:appearance-none [&::-webkit-slider-thumb]:bg-[#666]"
            />
            <button type="button" aria-label="放大"><Svg w={12} h={11}><path d="M0 5.500h12M6 0v11" stroke="#666" strokeWidth="2" /></Svg></button>
        </div>
        <span className="w-14 pb-0.5 text-right text-base">100%</span>
    </footer>
);

export default function App() {
    return (
        <div className="flex h-screen flex-col overflow-hidden bg-[#e5e5e5] font-['Noto_Sans','Noto_Sans_CJK_SC',sans-serif] text-[15px]">
            <div className="bg-[#217346]">
                <TitleBar />
                <TabBar />
            </div>
            <Ribbon />
            <FormulaBar />
            <Worksheet />
            <SheetTabs />
            <StatusBar />
        </div>
    );
}
